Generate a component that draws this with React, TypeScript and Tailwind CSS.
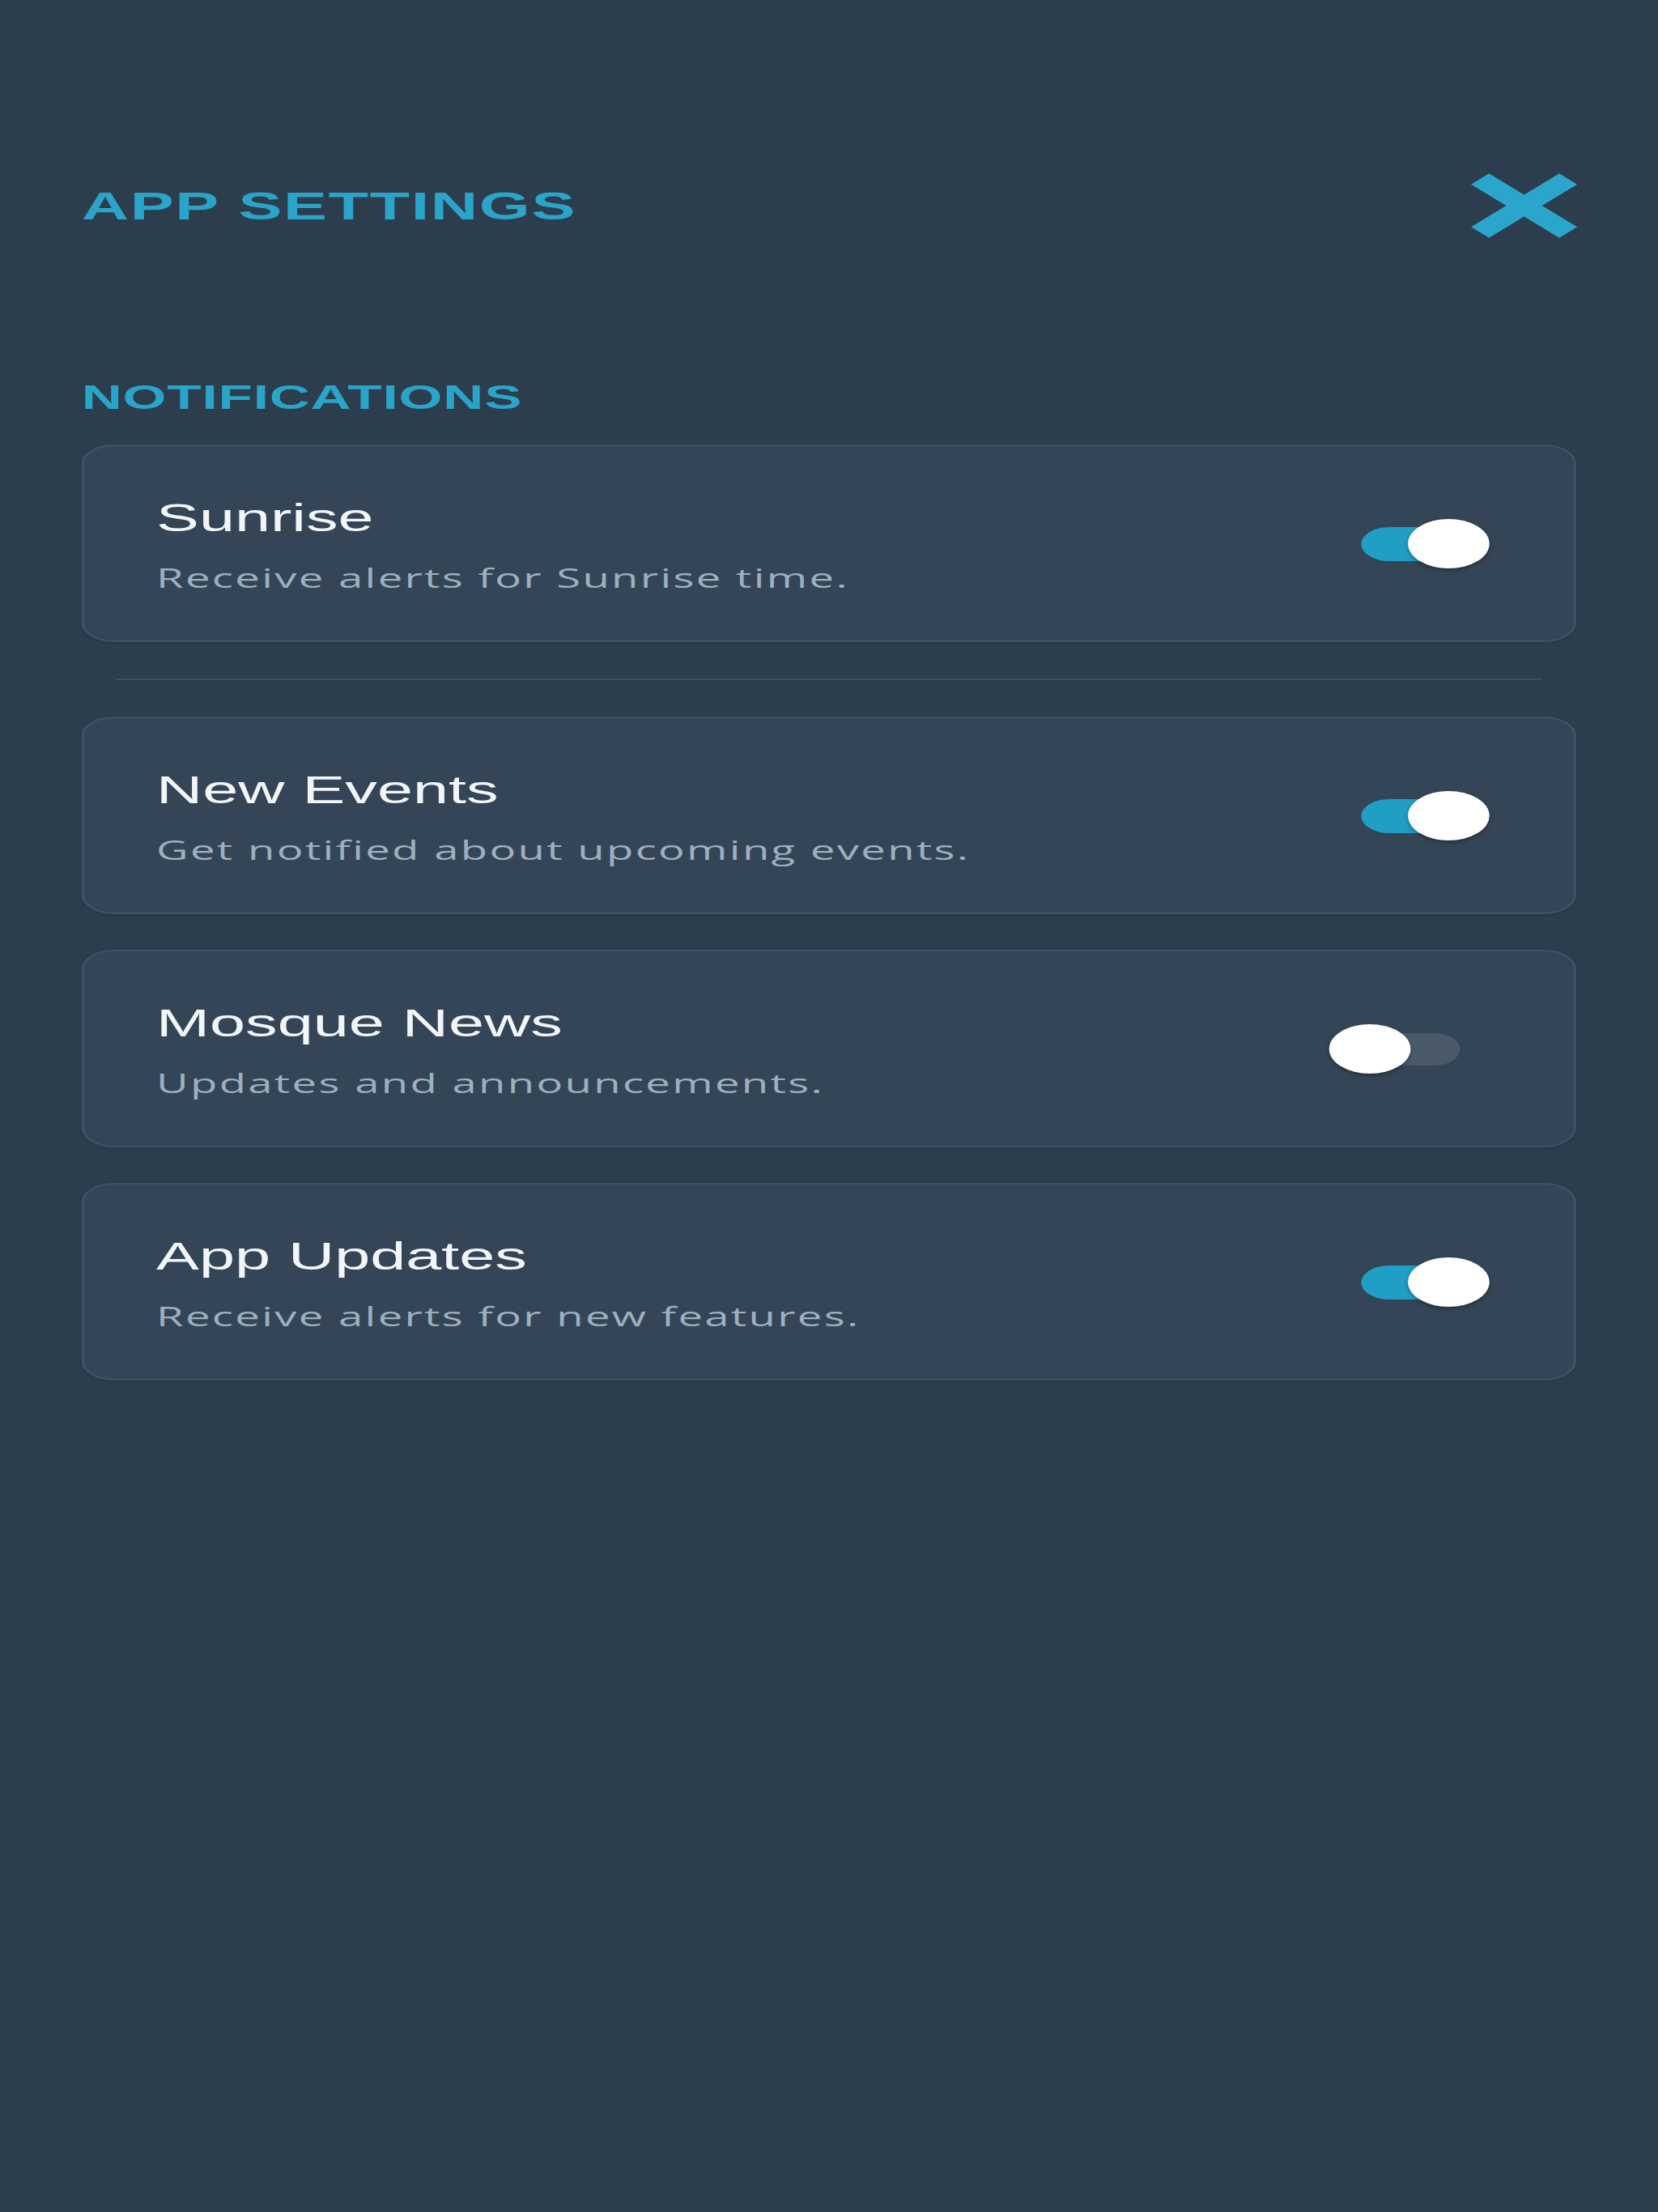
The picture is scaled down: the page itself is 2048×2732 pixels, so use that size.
import React, { useState } from 'react'

type Setting = {
  id: string
  title: string
  description: string
  enabled: boolean
}

const initialSettings: Setting[] = [
  { id: 'sunrise', title: 'Sunrise', description: 'Receive alerts for Sunrise time.', enabled: true },
  { id: 'events', title: 'New Events', description: 'Get notified about upcoming events.', enabled: true },
  { id: 'news', title: 'Mosque News', description: 'Updates and announcements.', enabled: false },
  { id: 'updates', title: 'App Updates', description: 'Receive alerts for new features.', enabled: true },
]

function Toggle({ on, onClick }: { on: boolean; onClick: () => void }) {
  return (
    <button type="button" onClick={onClick} className="relative h-[61px] w-[120px] shrink-0">
      <span
        className={
          on
            ? 'absolute left-[24px] right-[24px] top-[10px] h-[42px] rounded-full bg-[#1f9ec6]'
            : 'absolute left-[24px] right-[22px] top-[11px] h-[40px] rounded-full bg-[#4a5a6a]'
        }
      />
      <span
        className={
          on
            ? 'absolute right-0 top-0 h-[61px] w-[61px] rounded-full bg-white shadow-[0_2px_4px_rgba(0,0,0,0.35)]'
            : 'absolute left-0 top-0 h-[61px] w-[61px] rounded-full bg-white shadow-[0_2px_4px_rgba(0,0,0,0.35)]'
        }
      />
    </button>
  )
}

function SettingCard({ setting, onToggle }: { setting: Setting; onToggle: () => void }) {
  return (
    <div className="flex items-center justify-between rounded-[24px] border-2 border-[#3a5468] bg-[#334557] py-[59px] pl-[54px] pr-[63px] shadow-[0_1px_3px_rgba(0,0,0,0.12)]">
      <div className="flex flex-col gap-[26px]">
        <div className="text-[48px] leading-[59px] text-[#f3f6f9]">{setting.title}</div>
        <div className="font-['Open_Sans',sans-serif] text-[33px] leading-[37px] tracking-[1.4px] text-[#9eafbf]">
          {setting.description}
        </div>
      </div>
      <Toggle on={setting.enabled} onClick={onToggle} />
    </div>
  )
}

export default function App() {
  const [settings, setSettings] = useState(initialSettings)

  const toggle = (id: string) =>
    setSettings((prev) => prev.map((s) => (s.id === id ? { ...s, enabled: !s.enabled } : s)))

  const [first, ...rest] = settings

  return (
    <div className="min-h-screen w-full overflow-hidden bg-[#2c3d4e] font-['Liberation_Sans',Arial,sans-serif]">
      {/* the screen is drawn narrow and stretched sideways, like the reference */}
      <div className="w-[1241px] origin-top-left scale-x-[1.65] px-[61px] pt-[213px]">
        <header className="flex items-center justify-between">
          <h1 className="text-[49px] font-bold leading-[59px] tracking-[1px] text-[#2ba4ca]">APP SETTINGS</h1>
          <button type="button" aria-label="Close" className="-mr-[2px] h-[82px] w-[82px]">
            <svg viewBox="0 0 82 82" className="h-[82px] w-[82px]">
              <path d="M8 8 L74 74 M74 8 L8 74" stroke="#2aa6cd" strokeWidth="19" fill="none" />
            </svg>
          </button>
        </header>

        <h2 className="mt-[171px] text-[42px] font-bold leading-[50px] tracking-[0.5px] text-[#2ba4ca]">
          NOTIFICATIONS
        </h2>

        <div className="mt-[33px] flex flex-col">
          <SettingCard setting={first} onToggle={() => toggle(first.id)} />
          <div className="mx-[26px] my-[45px] h-[2px] bg-[#3c5264]" />
          <div className="flex flex-col gap-[44px]">
            {rest.map((s) => (
              <SettingCard key={s.id} setting={s} onToggle={() => toggle(s.id)} />
            ))}
          </div>
        </div>
      </div>
    </div>
  )
}
